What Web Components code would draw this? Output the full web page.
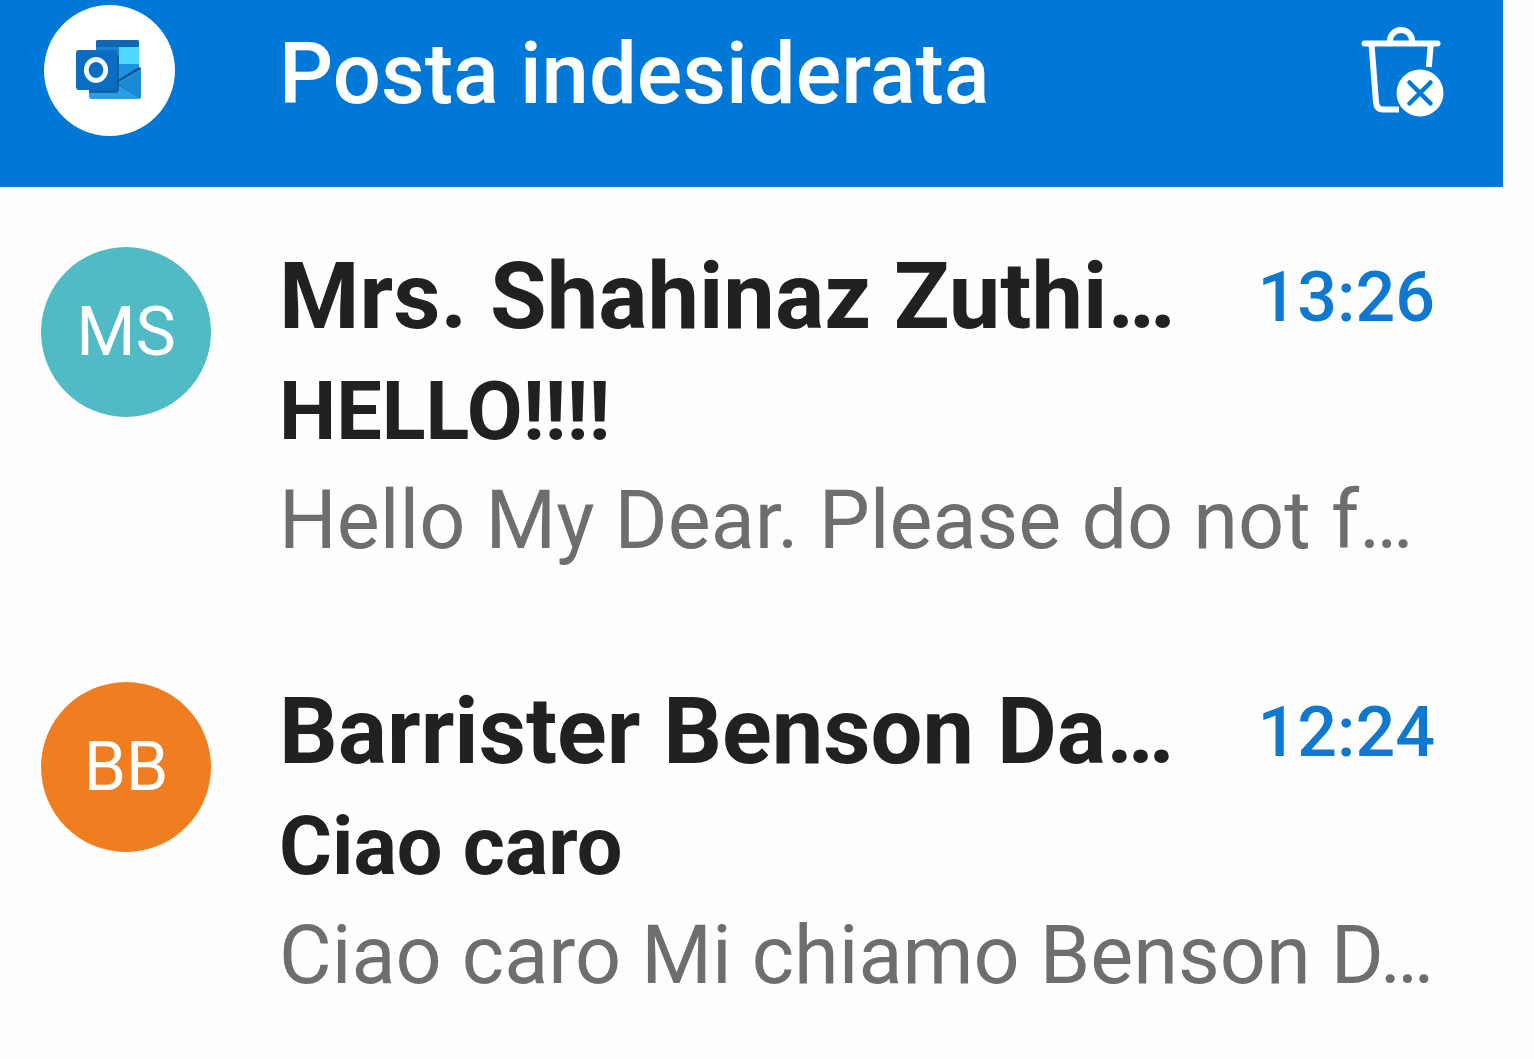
<!DOCTYPE html>
<html lang="it">
<head>
<meta charset="utf-8">
<meta name="viewport" content="width=device-width, initial-scale=1">
<title>Posta indesiderata</title>
<style>
body {
    margin: 0;
    background: #fefefe;
    font-family: Roboto, "Liberation Sans", sans-serif;
}
</style>
</head>
<body>
<mail-folder>
    <folder-bar slot="bar">Posta indesiderata</folder-bar>
    <mail-item initials="MS" color="#50bac5">
        <span slot="sender">Mrs. Shahinaz Zuthi…</span>
        <span slot="time">13:26</span>
        <span slot="subject">HELLO!!!!</span>
        <span slot="preview">Hello My Dear. Please do not f…</span>
    </mail-item>
    <mail-item initials="BB" color="#f07e20">
        <span slot="sender">Barrister Benson Da…</span>
        <span slot="time">12:24</span>
        <span slot="subject">Ciao caro</span>
        <span slot="preview">Ciao caro Mi chiamo Benson D…</span>
    </mail-item>
</mail-folder>

<script>
class MailFolder extends HTMLElement {
    constructor() {
        super();

        this._shadowRoot = this.attachShadow({ mode: "open" });

        this._shadowRoot.innerHTML = `
<style>
:host {
    display: block;
    padding-right: 31px;
}
</style>
<slot name="bar"></slot>
<main><slot></slot></main>
`;
    }
}

class AccountButton extends HTMLElement {
    constructor() {
        super();

        this._shadowRoot = this.attachShadow({ mode: "open" });

        this._shadowRoot.innerHTML = `
<style>
:host {
    display: block;
}

button {
    display: block;
    width: 131px;
    height: 131px;
    padding: 0;
    border: 0;
    border-radius: 50%;
    background: #fff;
    cursor: pointer;
}

svg {
    display: block;
    width: 100%;
    height: 100%;
}
</style>
<button type="button" aria-label="Account">
    <svg viewBox="14 5 131 131" aria-hidden="true">
        <path d="M68 40h39a2 2 0 0 1 2 2v28H66V42a2 2 0 0 1 2-2z" fill="#1490df"/>
        <path d="M68 40h39a2 2 0 0 1 2 2v5H66v-5a2 2 0 0 1 2-2z" fill="#1066b5"/>
        <path d="M89 47h20v17H89z" fill="#50d9ff"/>
        <path d="M66 47h23v17H66z" fill="#1883d0"/>
        <path d="M66 64h43v20H66z" fill="#1a93e0"/>
        <path d="M109 67l2 1v3L88 84l-2-3z" fill="#0f548c"/>
        <path d="M60 83h27l24-14v28a2 2 0 0 1-2 2H62a3 3 0 0 1-3-3V83z" fill="#28a0e6"/>
        <path d="M111 70v28L87 84z" fill="#1a8ad8"/>
        <path d="M87 84l23 14" stroke="#1479c4" fill="none"/>
        <path d="M59 90V55h26a4 4 0 0 1 4 4v30a4 4 0 0 1-4 4H59z" fill="#0a4f8c" opacity=".75"/>
        <rect x="46" y="50" width="41" height="40" rx="3" fill="#0a6cc3"/>
        <ellipse cx="66" cy="70" rx="9.7" ry="10.5" fill="none" stroke="#f2fbff" stroke-width="4.8"/>
    </svg>
</button>
`;
    }
}

class EmptyFolderButton extends HTMLElement {
    constructor() {
        super();

        this._shadowRoot = this.attachShadow({ mode: "open" });

        this._shadowRoot.innerHTML = `
<style>
:host {
    display: block;
}

button {
    display: block;
    width: 110px;
    height: 110px;
    padding: 0;
    border: 0;
    background: none;
    cursor: pointer;
}

svg {
    display: block;
    width: 100%;
    height: 100%;
}
</style>
<button type="button" aria-label="Svuota cartella">
    <svg viewBox="0 4 110 110" fill="none" stroke="#fff" stroke-width="6" aria-hidden="true">
        <path d="M14.5 28.5h73" stroke-linecap="round"/>
        <path d="M40 27v-1a11 11 0 0 1 22 0v1"/>
        <path d="M21.5 29l4.5 58q.5 7.5 7 7.5h16"/>
        <path d="M80.800 29l-2 23"/>
        <circle cx="70" cy="78" r="23.5" fill="#fff" stroke="none"/>
        <path d="M59.500 67.5l21 21M80.5 67.5l-21 21" stroke="#0078d7" stroke-width="4.5" stroke-linecap="round"/>
    </svg>
</button>
`;
    }
}

class FolderBar extends HTMLElement {
    constructor() {
        super();

        this._shadowRoot = this.attachShadow({ mode: "open" });

        this._shadowRoot.innerHTML = `
<style>
:host {
    display: block;
    background: #0078d7;
    color: #fff;
}

header {
    display: flex;
    align-items: center;
    padding: 5px 43px 44px 44px;
}

account-button {
    flex: none;
    align-self: flex-start;
}

h1 {
    flex: 1;
    min-width: 0;
    margin: 0 0 0 104px;
    font-size: 85px;
    font-weight: 500;
    line-height: 138px;
    white-space: nowrap;
}

empty-folder-button {
    flex: none;
}
</style>
<header>
    <account-button></account-button>
    <h1><slot></slot></h1>
    <empty-folder-button></empty-folder-button>
</header>
`;
    }
}

class MailItem extends HTMLElement {
    static get observedAttributes() {
        return ["initials", "color"];
    }

    constructor() {
        super();

        this._shadowRoot = this.attachShadow({ mode: "open" });

        this._shadowRoot.innerHTML = `
<style>
:host {
    display: block;
}

a {
    display: flex;
    align-items: flex-start;
    gap: 68px;
    padding: 56px 68px 53px 41px;
    color: #212121;
    text-decoration: none;
}

#avatar {
    flex: none;
    width: 170px;
    margin-top: 4px;
    border-radius: 50%;
    color: #fff;
    font-size: 68px;
    line-height: 170px;
    text-align: center;
}

#body {
    display: flex;
    flex: 1;
    flex-direction: column;
    gap: 13px;
    min-width: 0;
    white-space: nowrap;
}

#head {
    display: flex;
    align-items: center;
    justify-content: space-between;
}

#sender {
    font-size: 92px;
    font-weight: 700;
    line-height: 108px;
}

#time {
    color: #0f78d0;
    font-size: 70px;
    font-weight: 500;
    line-height: 96px;
}

#subject {
    font-size: 81px;
    font-weight: 700;
    line-height: 96px;
}

#preview {
    color: #6e6e6e;
    font-size: 81px;
    line-height: 96px;
}
</style>
<a href="#">
    <div id="avatar"></div>
    <div id="body">
        <div id="head">
            <div id="sender"><slot name="sender"></slot></div>
            <div id="time"><slot name="time"></slot></div>
        </div>
        <div id="subject"><slot name="subject"></slot></div>
        <div id="preview"><slot name="preview"></slot></div>
    </div>
</a>
`;
    }

    connectedCallback() {
        this.updateAvatar();
    }

    attributeChangedCallback(name, oldValue, newValue) {
        this.updateAvatar();
    }

    updateAvatar() {
        const avatar = this._shadowRoot.getElementById("avatar");
        avatar.textContent = this.getAttribute("initials");
        avatar.style.background = this.getAttribute("color");
    }
}

window.customElements.define("mail-folder", MailFolder);
window.customElements.define("account-button", AccountButton);
window.customElements.define("empty-folder-button", EmptyFolderButton);
window.customElements.define("folder-bar", FolderBar);
window.customElements.define("mail-item", MailItem);
</script>
</body>
</html>
